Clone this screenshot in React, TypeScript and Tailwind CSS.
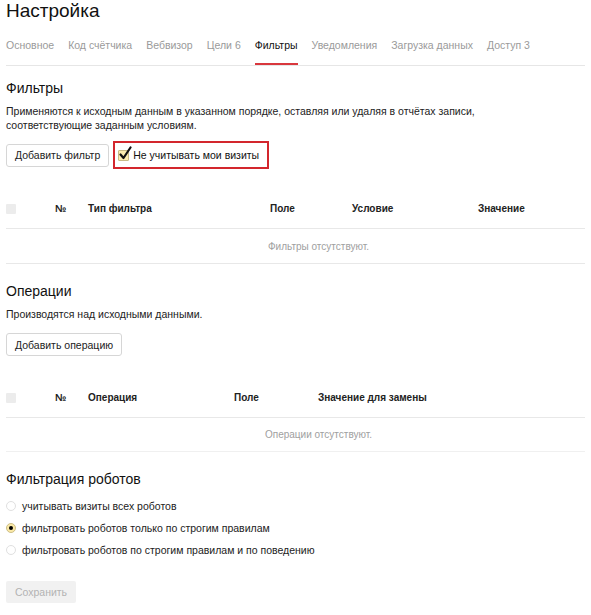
const tabs = [
  'Основное',
  'Код счётчика',
  'Вебвизор',
  'Цели 6',
  'Фильтры',
  'Уведомления',
  'Загрузка данных',
  'Доступ 3',
]

const robots = [
  { label: 'учитывать визиты всех роботов', checked: false },
  { label: 'фильтровать роботов только по строгим правилам', checked: true },
  { label: 'фильтровать роботов по строгим правилам и по поведению', checked: false },
]

function HeadBox() {
  return <span className="block h-[10px] w-[10px] rounded-[1px] bg-[#ececec]" />
}

function Button({ children }: { children: React.ReactNode }) {
  return (
    <button className="h-[23px] rounded-[3px] border border-[#d6d6d6] bg-white px-[8px] text-[10.5px] leading-[14px] text-[#222]">
      {children}
    </button>
  )
}

function Radio({ checked }: { checked: boolean }) {
  if (checked) {
    return (
      <span className="flex h-[10px] w-[10px] items-center justify-center rounded-full border border-[#cdbf8a] bg-[#fbe9a6]">
        <span className="h-[4px] w-[4px] rounded-full bg-black" />
      </span>
    )
  }
  return <span className="block h-[10px] w-[10px] rounded-full border border-[#e0e0e0] bg-white" />
}

export default function App() {
  return (
    <div className="min-h-[615px] bg-white px-[6px] font-['Liberation_Sans',Arial,sans-serif] text-[#111]">
      <h1 className="text-[19px] leading-[22px] text-[#111]">Настройка</h1>

      <nav className="mt-[13px] flex gap-[14px] border-b border-[#e6e6e6]">
        {tabs.map((t) => (
          <span
            key={t}
            className={
              t === 'Фильтры'
                ? 'border-b-2 border-[#d9373d] pt-[3px] pb-[11px] text-[10.5px] leading-[14px] text-[#111]'
                : 'border-b-2 border-transparent pt-[3px] pb-[11px] text-[10.5px] leading-[14px] text-[#9a9a9a]'
            }
          >
            {t}
          </span>
        ))}
      </nav>

      <h2 className="mt-[13px] text-[14px] leading-[18px]">Фильтры</h2>
      <p className="mt-[8px] text-[10.5px] leading-[13.5px] text-[#222]">
        Применяются к исходным данным в указанном порядке, оставляя или удаляя в отчётах записи,
        <br />
        соответствующие заданным условиям.
      </p>

      <div className="mt-[9px] flex items-center gap-[4px]">
        <Button>Добавить фильтр</Button>
        <label className="flex h-[28px] items-center gap-[4px] border-2 border-[#d3262d] pl-[3px] pr-[8px] text-[10.5px] leading-[14px] text-[#111]">
          <span className="relative block h-[11px] w-[11px] rounded-[1px] border border-[#c9bb86] bg-[#fcecb0]">
            <svg
              viewBox="0 0 14 14"
              className="absolute left-[-1px] top-[-5px] h-[14px] w-[14px]"
              fill="none"
              stroke="#111"
              strokeWidth="2.2"
              strokeLinecap="round"
              strokeLinejoin="round"
            >
              <path d="M2.5 8.5 L5.5 12 L12.5 1.5" />
            </svg>
          </span>
          Не учитывать мои визиты
        </label>
      </div>

      <div className="mt-[33px] grid grid-cols-[49px_33px_182px_82px_126px_1fr] items-center border-b border-[#e8e8e8] pb-[12px] text-[10px] font-bold leading-[14px] text-[#222]">
        <HeadBox />
        <span>№</span>
        <span>Тип фильтра</span>
        <span>Поле</span>
        <span>Условие</span>
        <span>Значение</span>
      </div>
      <div className="border-b border-[#e8e8e8] pt-[11px] pb-[9px] text-center text-[10px] leading-[14px] text-[#a0a0a0]">
        <span className="ml-[46px]">Фильтры отсутствуют.</span>
      </div>

      <h2 className="mt-[18px] text-[14px] leading-[18px]">Операции</h2>
      <p className="mt-[7px] text-[10.5px] leading-[14px] text-[#222]">Производятся над исходными данными.</p>
      <div className="mt-[12px] flex">
        <Button>Добавить операцию</Button>
      </div>

      <div className="mt-[35px] grid grid-cols-[49px_33px_146px_84px_1fr] items-center border-b border-[#e8e8e8] pb-[12px] text-[10px] font-bold leading-[14px] text-[#222]">
        <HeadBox />
        <span>№</span>
        <span>Операция</span>
        <span>Поле</span>
        <span>Значение для замены</span>
      </div>
      <div className="border-b border-[#f0f0f0] pt-[10px] pb-[9px] text-center text-[10px] leading-[14px] text-[#a0a0a0]">
        <span className="ml-[46px]">Операции отсутствуют.</span>
      </div>

      <h2 className="mt-[18px] text-[14px] leading-[18px]">Фильтрация роботов</h2>
      <div className="mt-[7px] flex flex-col">
        {robots.map((r) => (
          <div key={r.label} className="flex h-[22px] items-center gap-[6px] text-[10.5px] leading-[14px] text-[#222]">
            <Radio checked={r.checked} />
            {r.label}
          </div>
        ))}
      </div>

      <div className="mt-[20px] flex">
        <button className="h-[22px] w-[70px] rounded-[2px] bg-[#f1f1f1] text-[10.5px] leading-[14px] text-[#b3b3b3]">
          Сохранить
        </button>
      </div>
    </div>
  )
}
